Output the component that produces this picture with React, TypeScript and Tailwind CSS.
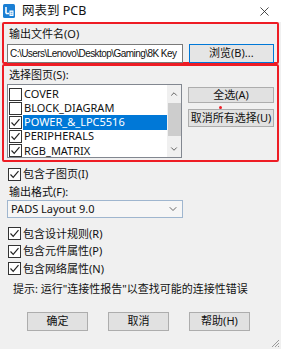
import { ChevronDown, ChevronUp, X } from "lucide-react";

const font = { fontFamily: '"Noto Sans", "Noto Sans CJK SC", sans-serif' };

function Check({ checked }: { checked: boolean }) {
  return (
    <span className="w-[13px] h-[13px] border border-[#333] bg-white flex items-center justify-center shrink-0">
      {checked && (
        <svg width="11" height="11" viewBox="0 0 11 11">
          <path d="M1.5 5.5 L4.2 8.3 L9.5 2.2" fill="none" stroke="#222" strokeWidth="1.2" />
        </svg>
      )}
    </span>
  );
}

const sheets = [
  { name: "COVER", checked: false },
  { name: "BLOCK_DIAGRAM", checked: false },
  { name: "POWER_&_LPC5516", checked: true, selected: true },
  { name: "PERIPHERALS", checked: true },
  { name: "RGB_MATRIX", checked: true },
];

const options = ["包含设计规则(R)", "包含元件属性(P)", "包含网络属性(N)"];

export default function App() {
  return (
    <div className="w-[281px] h-[349px] bg-[#f0f0f0] text-[11px] text-[#111] flex flex-col overflow-hidden relative" style={font}>
      {/* title bar */}
      <div className="h-[22px] bg-white flex items-center pl-[3px] pr-[9px] shrink-0">
        <svg width="12" height="14" viewBox="0 0 12 14">
          <rect x="0" y="0" width="12" height="14" rx="1.5" fill="#1a7fd4" />
          <path d="M3 3 V9.5 M3 9.5 H6" stroke="white" strokeWidth="1.6" fill="none" />
          <rect x="6.5" y="6.5" width="4" height="5.5" fill="white" />
          <path d="M7.5 8.3 H9.5 M7.5 10.2 H9.5" stroke="#1a7fd4" strokeWidth="0.8" />
        </svg>
        <span className="ml-[7px] text-[12.5px]">网表到 PCB</span>
        <X className="ml-auto w-[15px] h-[15px] text-[#222]" strokeWidth={1.3} />
      </div>

      {/* output file */}
      <div className="mx-[2px] h-[42px] border-[2.5px] border-[#ee1c24] rounded-[2px] px-[3px] flex flex-col">
        <div className="leading-[16px] mt-[2px] ml-[2px]">输出文件名(O)</div>
        <div className="flex items-center mt-[2px]">
          <div
            className="w-[177px] h-[19px] bg-white border border-[#7a7a7a] flex items-center pl-[2px] overflow-hidden whitespace-nowrap text-[10px] tracking-[-0.55px]"
            style={{ fontFamily: '"Liberation Sans", sans-serif' }}
          >
            C:\Users\Lenovo\Desktop\Gaming\8K Key
          </div>
          <div className="ml-[6px] w-[86px] h-[19px] bg-[#e5e5e5] border border-[#0078d7] flex items-center justify-center">
            浏览(B)...
          </div>
        </div>
      </div>

      {/* sheets */}
      <div className="mx-[2px] h-[98px] border-[2.5px] border-[#ee1c24] rounded-[2px] px-[3px] flex flex-col">
        <div className="leading-[16px] mt-[1px] ml-[2px]">选择图页(S):</div>
        <div className="flex mt-[1px]">
          <div className="w-[176px] h-[74px] bg-white border border-[#828790] flex pt-[2px] pl-[1px]">
            <div className="flex-1 flex flex-col">
              {sheets.map((s) => (
                <div key={s.name} className="h-[14.2px] flex items-center">
                  <Check checked={s.checked} />
                  <span
                    className={`ml-[1px] pl-[1px] flex-1 h-full flex items-center ${
                      s.selected ? "bg-[#0078d7] text-white" : ""
                    }`}
                  >
                    {s.name}
                  </span>
                </div>
              ))}
            </div>
            <div className="w-[14px] -mt-[2px] bg-[#f0f0f0] flex flex-col items-center">
              <ChevronUp className="w-[10px] h-[10px] mt-[4px] text-[#555]" strokeWidth={2.2} />
              <div className="w-[13px] h-[33px] bg-[#cdcdcd] mt-[4px]" />
              <ChevronDown className="w-[10px] h-[10px] mt-auto mb-[3px] text-[#555]" strokeWidth={2.2} />
            </div>
          </div>
          <div className="ml-[6px] flex flex-col">
            <div className="mt-[3px] w-[86px] h-[16px] bg-[#e1e1e1] border border-[#adadad] flex items-center justify-center">
              全选(A)
            </div>
            <div className="relative mt-[6px] w-[86px] h-[18px] bg-[#e1e1e1] border border-[#adadad] flex items-center justify-center whitespace-nowrap">
              <span className="absolute -top-[4px] left-[30px] w-[3px] h-[3px] rounded-full bg-[#ee1c24]" />
              取消所有选择(U)
            </div>
          </div>
        </div>
      </div>

      {/* options */}
      <div className="flex flex-col pl-[8px]">
        <div className="h-[18px] mt-[3px] flex items-center gap-[2px]">
          <Check checked />
          <span>包含子图页(I)</span>
        </div>
        <div className="leading-[16px] ml-[1px] mt-[1px]">输出格式(F):</div>
        <div className="-ml-[1px] mt-[0px] w-[176px] h-[18px] bg-[#f6f6f6] border border-[#9fb6cf] flex items-center pl-[3px] pr-[3px]">
          PADS Layout 9.0
          <ChevronDown className="ml-auto w-[12px] h-[12px] text-[#444]" strokeWidth={1.6} />
        </div>
        <div className="flex flex-col mt-[7px]">
          {options.map((o) => (
            <div key={o} className="h-[17.5px] flex items-center gap-[2px]">
              <Check checked />
              <span>{o}</span>
            </div>
          ))}
        </div>
        <div className="ml-[5px] mt-[3px] leading-[16px] whitespace-nowrap">
          提示: 运行"连接性报告"以查找可能的连接性错误
        </div>
      </div>

      {/* footer buttons */}
      <div className="flex pl-[27px] gap-[20px] mt-[15px]">
        {["确定", "取消", "帮助(H)"].map((b) => (
          <div key={b} className="w-[61px] h-[19px] bg-[#e1e1e1] border border-[#adadad] flex items-center justify-center">
            {b}
          </div>
        ))}
      </div>

      <svg className="absolute right-[1px] bottom-[1px]" width="10" height="10" viewBox="0 0 10 10">
        <path d="M9 2 L2 9 M9 5 L5 9 M9 8 L8 9" stroke="#9a9a9a" strokeWidth="1" />
      </svg>
    </div>
  );
}
